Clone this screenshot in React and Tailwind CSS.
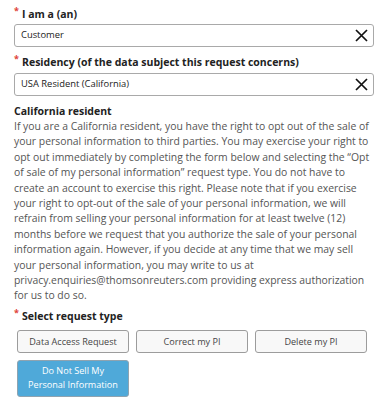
import React from "react";

function XIcon() {
  return (
    <svg width="13" height="13" viewBox="0 0 13 13" className="shrink-0">
      <path d="M1 1 L12 12 M12 1 L1 12" stroke="#111" strokeWidth="1.7" fill="none" />
    </svg>
  );
}

function Label({ children }) {
  return (
    <div className="flex items-start h-[18px] text-[10.5px] font-bold text-[#222] leading-[18px]">
      <span className="text-[#e0413b] text-[9px] leading-[9px] w-[8px] mt-[1px]">*</span>
      <span>{children}</span>
    </div>
  );
}

function Field({ value }) {
  return (
    <div className="flex items-center justify-between h-[23px] border border-[#a9a9a9] rounded-[3px] pl-[6px] pr-[5px] bg-white">
      <span className="text-[9.4px] text-[#222]">{value}</span>
      <XIcon />
    </div>
  );
}

function Btn({ children, active }) {
  return (
    <div
      className={
        active
          ? "w-[112px] h-[37px] flex items-center justify-center text-center rounded-[3px] border border-[#8fa3b0] bg-[#4fa9d9] text-white text-[9.1px] leading-[14px]"
          : "w-[112px] h-[23px] flex items-center justify-center text-center rounded-[3px] border border-[#9c9c9c] bg-[#f8f8f8] text-[#444] text-[9.1px]"
      }
    >
      {children}
    </div>
  );
}

const lines = [
  "If you are a California resident, you have the right to opt out of the sale of",
  "your personal information to third parties. You may exercise your right to",
  "opt out immediately by completing the form below and selecting the “Opt",
  "of sale of my personal information” request type. You do not have to",
  "create an account to exercise this right. Please note that if you exercise",
  "your right to opt-out of the sale of your personal information, we will",
  "refrain from selling your personal information for at least twelve (12)",
  "months before we request that you authorize the sale of your personal",
  "information again. However, if you decide at any time that we may sell",
  "your personal information, you may write to us at",
  "privacy.enquiries@thomsonreuters.com providing express authorization",
  "for us to do so.",
];

export default function App() {
  return (
    <div className="w-[388px] h-[402px] bg-white px-[14px] pt-[5px]" style={{ fontFamily: '"Open Sans", sans-serif' }}>
      <Label>I am a (an)</Label>
      <div className="mt-[1px]">
        <Field value="Customer" />
      </div>
      <div className="mt-[6px]">
        <Label>Residency (of the data subject this request concerns)</Label>
      </div>
      <div className="mt-[2px]">
        <Field value="USA Resident (California)" />
      </div>
      <div className="mt-[7px] text-[10.5px] font-bold text-[#222] leading-[16px]">California resident</div>
      <p className="text-[10.4px] text-[#555] leading-[15.4px]">
        {lines.map((l, i) => (
          <span key={i} className="block whitespace-nowrap">{l}</span>
        ))}
      </p>
      <div className="mt-[3px]">
        <Label>Select request type</Label>
      </div>
      <div className="mt-[5px] pl-[3px] flex flex-wrap gap-x-[7px] gap-y-[7px] w-[360px]">
        <Btn>Data Access Request</Btn>
        <Btn>Correct my PI</Btn>
        <Btn>Delete my PI</Btn>
        <Btn active>
          Do Not Sell My
          <br />
          Personal Information
        </Btn>
      </div>
    </div>
  );
}
